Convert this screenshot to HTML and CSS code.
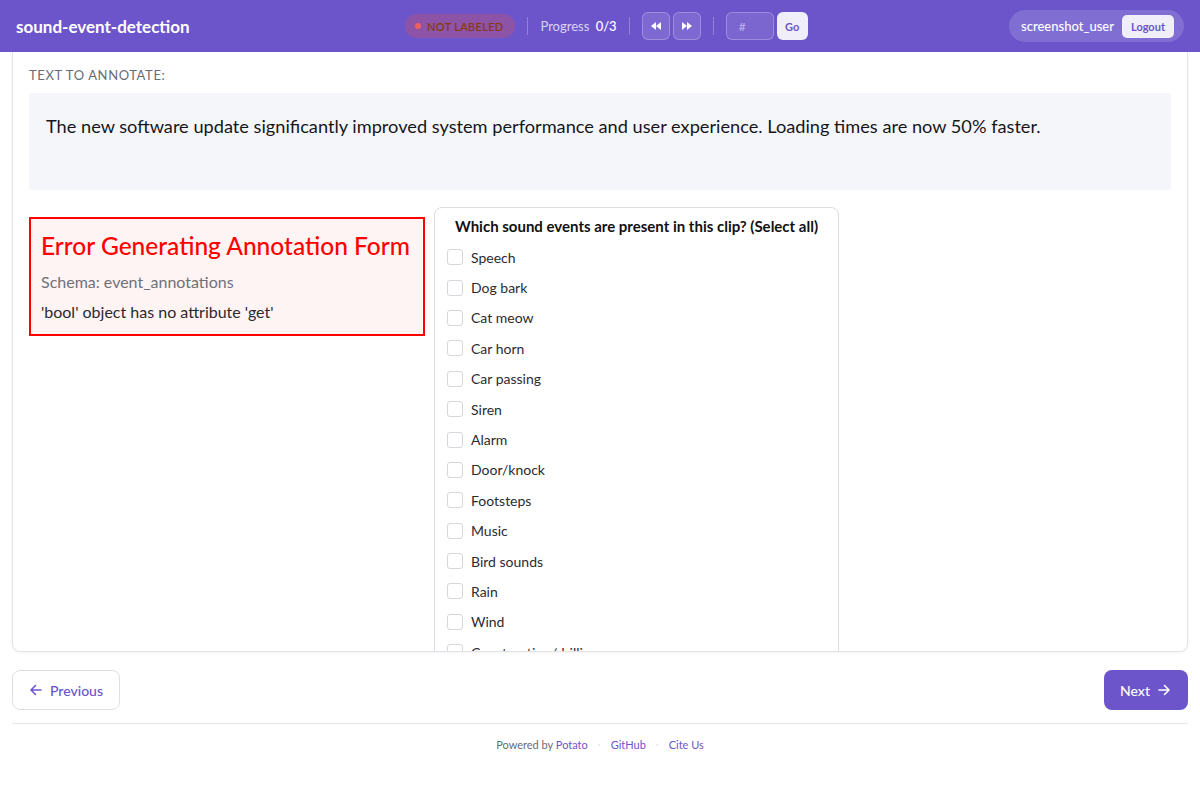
FILE: index.html
```html
<!DOCTYPE html>
<html lang="en">
<head>
    <meta charset="UTF-8">
    <meta name="viewport" content="width=device-width, initial-scale=1.0">
    <title>sound-event-detection</title>
    <link rel="stylesheet" href="styles.css">
</head>
<body>
    <header class="topbar">
        <div class="brand">sound-event-detection</div>
        <div class="status-group">
            <span class="badge"><span class="badge-dot"></span>NOT LABELED</span>
            <span class="sep"></span>
            <span class="progress">Progress <b>0/3</b></span>
            <span class="sep"></span>
            <button class="nav-btn" title="Previous">
                <svg width="12" height="12" viewBox="0 0 12 12"><path d="M6 2 L1 6 L6 10 Z M11 2 L6 6 L11 10 Z" fill="#fff"/></svg>
            </button>
            <button class="nav-btn" title="Next">
                <svg width="12" height="12" viewBox="0 0 12 12"><path d="M1 2 L6 6 L1 10 Z M6 2 L11 6 L6 10 Z" fill="#fff"/></svg>
            </button>
            <span class="sep"></span>
            <input class="jump-input" type="text" placeholder="#">
            <button class="go-btn">Go</button>
        </div>
        <div class="user-box">
            <span class="user-name">screenshot_user</span>
            <button class="logout-btn">Logout</button>
        </div>
    </header>

    <main class="page">
        <section class="annotate-card">
            <div class="section-label">TEXT TO ANNOTATE:</div>
            <div class="text-box">
                The new software update significantly improved system performance and user experience. Loading times are now 50% faster.
            </div>

            <div class="forms-row">
                <div class="error-box">
                    <h2>Error Generating Annotation Form</h2>
                    <p class="schema">Schema: event_annotations</p>
                    <p class="error-msg">'bool' object has no attribute 'get'</p>
                </div>

                <div class="multiselect">
                    <div class="question">Which sound events are present in this clip? (Select all)</div>
                    <label class="option"><span class="box"></span>Speech</label>
                    <label class="option"><span class="box"></span>Dog bark</label>
                    <label class="option"><span class="box"></span>Cat meow</label>
                    <label class="option"><span class="box"></span>Car horn</label>
                    <label class="option"><span class="box"></span>Car passing</label>
                    <label class="option"><span class="box"></span>Siren</label>
                    <label class="option"><span class="box"></span>Alarm</label>
                    <label class="option"><span class="box"></span>Door/knock</label>
                    <label class="option"><span class="box"></span>Footsteps</label>
                    <label class="option"><span class="box"></span>Music</label>
                    <label class="option"><span class="box"></span>Bird sounds</label>
                    <label class="option"><span class="box"></span>Rain</label>
                    <label class="option"><span class="box"></span>Wind</label>
                    <label class="option"><span class="box"></span>Construction/drilling</label>
                    <label class="option"><span class="box"></span>Other</label>
                </div>
            </div>
        </section>

        <div class="pager">
            <button class="prev-btn">
                <svg width="14" height="14" viewBox="0 0 14 14"><path d="M12 7 H2 M6.5 2.5 L2 7 L6.5 11.5" stroke="#6e56cf" stroke-width="1.6" fill="none" stroke-linecap="round" stroke-linejoin="round"/></svg>
                Previous
            </button>
            <button class="next-btn">
                Next
                <svg width="14" height="14" viewBox="0 0 14 14"><path d="M2 7 H12 M7.5 2.5 L12 7 L7.5 11.5" stroke="#fff" stroke-width="1.6" fill="none" stroke-linecap="round" stroke-linejoin="round"/></svg>
            </button>
        </div>

        <footer class="footer">
            <span>Powered by <a href="#">Potato</a></span>
            <span class="dot">·</span>
            <a href="#">GitHub</a>
            <span class="dot">·</span>
            <a href="#">Cite Us</a>
        </footer>
    </main>
</body>
</html>
```

FILE: styles.css
```css
body {
    margin: 0;
    font-family: Lato, "Noto Sans", sans-serif;
    color: #1f1f24;
    background: #fff;
}
button {
    font-family: inherit;
    cursor: pointer;
}

/* top bar */
.topbar {
    height: 52px;
    background: #6c55cb;
    display: flex;
    align-items: center;
    justify-content: space-between;
    padding: 0 16px;
    box-sizing: border-box;
}
.brand {
    color: #fff;
    font-weight: 700;
    font-size: 17px;
}
.status-group {
    display: flex;
    align-items: center;
    gap: 3px;
    margin-left: 14px;
}
.badge {
    display: flex;
    align-items: center;
    gap: 6px;
    height: 24px;
    padding: 0 12px 0 10px;
    border-radius: 12px;
    background: rgba(190, 80, 110, 0.4);
    color: #8a3a10;
    font-size: 11px;
    font-weight: 600;
    letter-spacing: 0.3px;
}
.badge-dot {
    width: 6px;
    height: 6px;
    border-radius: 50%;
    background: #f06060;
}
.sep {
    width: 1px;
    height: 18px;
    background: rgba(255, 255, 255, 0.25);
    margin: 0 9px;
}
.progress {
    color: rgba(255, 255, 255, 0.75);
    font-size: 13px;
}
.progress b {
    color: #fff;
    font-weight: 500;
    margin-left: 3px;
}
.nav-btn {
    width: 28px;
    height: 28px;
    border-radius: 6px;
    border: 1px solid rgba(255, 255, 255, 0.25);
    background: rgba(255, 255, 255, 0.12);
    display: flex;
    align-items: center;
    justify-content: center;
    padding: 0;
}
.jump-input {
    width: 48px;
    height: 28px;
    box-sizing: border-box;
    border-radius: 6px;
    border: 1px solid rgba(255, 255, 255, 0.25);
    background: rgba(255, 255, 255, 0.1);
    color: #fff;
    padding: 0 12px;
    font-family: inherit;
    font-size: 12px;
}
.jump-input::placeholder {
    color: rgba(255, 255, 255, 0.5);
}
.go-btn {
    height: 28px;
    width: 31px;
    border: none;
    border-radius: 6px;
    background: #f0eef8;
    color: #6c55cb;
    font-size: 11px;
    font-weight: 700;
    padding: 0;
}
.user-box {
    display: flex;
    align-items: center;
    gap: 8px;
    height: 32px;
    padding: 0 10px 0 12px;
    border-radius: 16px;
    background: rgba(255, 255, 255, 0.15);
}
.user-name {
    color: #fff;
    font-size: 13px;
    font-weight: 500;
}
.logout-btn {
    height: 23px;
    padding: 0 9px;
    border: none;
    border-radius: 5px;
    background: #f0eef8;
    color: #6c55cb;
    font-size: 11px;
    font-weight: 700;
}

/* main */
.page {
    padding: 0 12px;
}
.annotate-card {
    height: 600px;
    box-sizing: border-box;
    overflow: hidden;
    border: 1px solid #e2e2e8;
    border-top: none;
    border-radius: 0 0 8px 8px;
    padding: 15px 16px 0;
    box-shadow: 0 1px 3px rgba(0, 0, 0, 0.05);
}
.section-label {
    color: #6b6b75;
    font-size: 13px;
    letter-spacing: 0.6px;
    margin-bottom: 10px;
}
.text-box {
    background: #f5f6fa;
    border-radius: 4px;
    height: 97px;
    box-sizing: border-box;
    padding: 22px 17px;
    font-size: 18.2px;
    color: #16161a;
}
.forms-row {
    display: flex;
    align-items: flex-start;
    gap: 9px;
    margin-top: 17px;
}
.error-box {
    margin-top: 10px;
    width: 396px;
    box-sizing: border-box;
    border: 2px solid #f00;
    background: #fff4f4;
    padding: 12px 10px 13px;
}
.error-box h2 {
    margin: 0 0 12px;
    color: #f00;
    font-size: 24.5px;
    font-weight: 500;
    white-space: nowrap;
}
.schema {
    margin: 0 0 11px;
    color: #707078;
    font-size: 16px;
}
.error-msg {
    margin: 0;
    color: #2a2a30;
    font-size: 16px;
}
.multiselect {
    width: 405px;
    box-sizing: border-box;
    border: 1px solid #dcdce2;
    border-radius: 8px;
    padding: 9px 12px 10px 12px;
}
.question {
    text-align: center;
    font-weight: 700;
    font-size: 15px;
    color: #111;
    margin-bottom: 7px;
}
.option {
    display: flex;
    align-items: center;
    gap: 8px;
    height: 30.4px;
    font-size: 14px;
    color: #2b2b33;
}
.box {
    width: 14px;
    height: 14px;
    border: 1px solid #d6d6dc;
    border-radius: 3px;
    background: #fff;
}

/* pager */
.pager {
    display: flex;
    justify-content: space-between;
    margin-top: 18px;
    padding-bottom: 13px;
    border-bottom: 1px solid #e5e5ea;
}
.prev-btn, .next-btn {
    height: 40px;
    display: flex;
    align-items: center;
    gap: 7px;
    border-radius: 8px;
    font-size: 14px;
    font-weight: 500;
}
.prev-btn {
    padding: 0 16px;
    background: #fff;
    border: 1px solid #dedee4;
    color: #6c55cb;
}
.next-btn {
    padding: 0 17px 0 16px;
    background: #6c55cb;
    border: none;
    color: #fff;
}

/* footer */
.footer {
    display: flex;
    justify-content: center;
    gap: 10px;
    padding-top: 14px;
    font-size: 11px;
    color: #6b6b75;
}
.footer a {
    color: #6c55cb;
    text-decoration: none;
}
.footer .dot {
    color: #ddd;
}
```
